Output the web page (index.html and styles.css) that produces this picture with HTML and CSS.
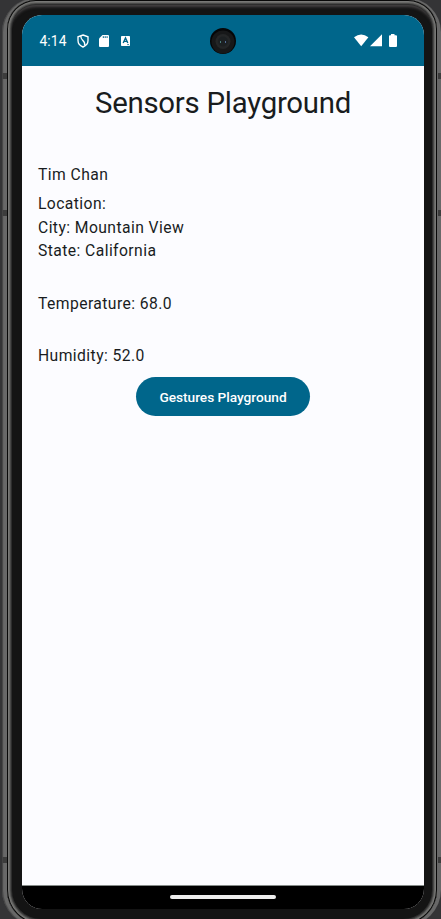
FILE: index.html
```html
<!DOCTYPE html>
<html lang="en">
<head>
<meta charset="utf-8">
<title>Sensors Playground</title>
<link rel="stylesheet" href="styles.css">
</head>
<body>
<div class="phone">
  <div class="shell">
    <div class="screen">
      <header class="status">
        <span class="clock">4:14</span>
        <svg class="shield" width="12" height="14" viewBox="0 0 12 14"><path d="M6 1 11 2.8V6.5C11 9.4 9 11.8 6 13 3 11.8 1 9.4 1 6.5V2.8ZM4 2.2C2.8 6.5 8.8 6.2 7.6 11.4" fill="none" stroke="#fff" stroke-width="1.35"/></svg>
        <svg class="card" width="10" height="12" viewBox="0 0 10 12"><path d="M3.5 0H9Q10 0 10 1V11Q10 12 9 12H1Q0 12 0 11V3.5Z" fill="#fff"/><path d="M4.3 1.2V3M6.2 1.2V3M8.1 1.2V3" stroke="#00668b"/></svg>
        <svg class="letter" width="9" height="10" viewBox="0 0 9 10"><rect width="9" height="10" rx=".8" fill="#fff"/><path d="M2.2 7 4.5 2 6.8 7M3 5.4H6" fill="none" stroke="#00668b" stroke-width="1.4"/><path d="M6.2 8.6H8" stroke="#00668b" stroke-width=".8"/></svg>
        <svg class="camera" width="26" height="26" viewBox="0 0 26 26"><circle cx="13" cy="13" r="13" fill="#050607"/><circle cx="13" cy="14" r="11.5" fill="#171819"/><circle cx="13" cy="13.5" r="7.5" fill="#242627"/><circle cx="13" cy="13.5" r="5" fill="#1c2022"/><path d="M10.5 13V15" stroke="#477b78"/><path d="M15.5 13V15" stroke="#536c9a"/></svg>
        <svg class="signals" width="44" height="14" viewBox="0 0 44 14"><path d="M0 3.2Q7.2-2.2 14.4 3.2L7.2 12.3Z" fill="#fff"/><path d="M16 12.2H28V.2Z" fill="#fff"/><path d="M37 0H40.5V1.3H42Q43 1.3 43 2.3V12Q43 13 42 13H36Q35 13 35 12V2.3Q35 1.3 36 1.3H37Z" fill="#fff"/></svg>
      </header>
      <main class="content">
        <h1 class="title">Sensors Playground</h1>
        <p class="name">Tim Chan</p>
        <p>Location:</p>
        <p>City: Mountain View</p>
        <p>State: California</p>
        <p class="reading">Temperature: 68.0</p>
        <p class="reading">Humidity: 52.0</p>
        <button class="button">Gestures Playground</button>
      </main>
      <footer class="nav"><div class="handle"></div></footer>
    </div>
  </div>
</div>
</body>
</html>
```
FILE: styles.css
```css
* { box-sizing: border-box; }
body {
  margin: 0;
  height: 919px;
  overflow: hidden;
  background: #343436;
  font-family: Roboto, sans-serif;
  color: #191c1e;
}
.phone {
  width: 439px;
  height: 928px;
  margin: -2px 0 0 2px;
  padding: 2px 2px 3px 5px;
  border-radius: 34px 34px 36px 36px;
  background:
    linear-gradient(#3c3c3c, #3c3c3c) 0 75px / 5px 6px no-repeat,
    linear-gradient(#3c3c3c, #3c3c3c) 0 212px / 5px 6px no-repeat,
    linear-gradient(#3c3c3c, #3c3c3c) 0 859px / 5px 6px no-repeat,
    linear-gradient(#3c3c3c, #3c3c3c) 100% 75px / 3px 6px no-repeat,
    linear-gradient(#3c3c3c, #3c3c3c) 100% 212px / 3px 6px no-repeat,
    linear-gradient(#3c3c3c, #3c3c3c) 100% 859px / 3px 6px no-repeat,
    #686868;
  box-shadow: inset 1px 0 1px #444;
}
.shell {
  width: 430px;
  height: 924px;
  padding: 15px 13px 0 15px;
  border-radius: 29px 29px 34px 34px;
  background: #141414;
  box-shadow:
    inset 0 0 0 1px #080808,
    inset 0 0 0 2px #777775,
    inset 0 0 0 3px #686866,
    inset 0 0 0 4px #484847,
    inset 0 0 0 5px #2d2d2d,
    inset 0 5px 3px 2px #464344;
}
.screen {
  display: flex;
  flex-direction: column;
  width: 402px;
  height: 894px;
  overflow: hidden;
  border-radius: 20px;
  background: #fcfcff;
}
.status {
  display: flex;
  align-items: center;
  height: 51px;
  padding: 1px 26px 0 17.5px;
  background: #00668b;
}
.clock {
  width: 37.5px;
  color: #fff;
  font-size: 13.8px;
  letter-spacing: .1px;
}
.card { margin-left: 10px; }
.letter { margin-left: 12px; }
.camera { margin-left: 80px; }
.signals { margin: 0 0 0 auto; }
.content {
  display: flex;
  flex: 1;
  flex-direction: column;
  padding: 17px 16px 16px;
}
.title {
  margin: 0;
  font-size: 29.4px;
  font-weight: 400;
  line-height: 40px;
  letter-spacing: -.26px;
  text-align: center;
}
p {
  margin: 0;
  font-size: 15.7px;
  line-height: 23.5px;
  letter-spacing: .42px;
}
.name { margin: 40px 0 5.5px; }
.reading { margin-top: 29px; }
.button {
  align-self: center;
  width: 174px;
  height: 39px;
  margin-top: 9.5px;
  padding: 1px 0 0;
  border: 0;
  border-radius: 20px;
  background: #00668b;
  color: #fff;
  font: 500 13.7px Roboto, sans-serif;
  letter-spacing: -.02px;
}
.nav {
  height: 24px;
  padding-top: 9px;
  border-top: 1px solid #858b88;
  background: #000;
}
.handle {
  width: 106px;
  height: 4px;
  margin: 0 auto;
  border-radius: 2px;
  background: #eee;
}
```
